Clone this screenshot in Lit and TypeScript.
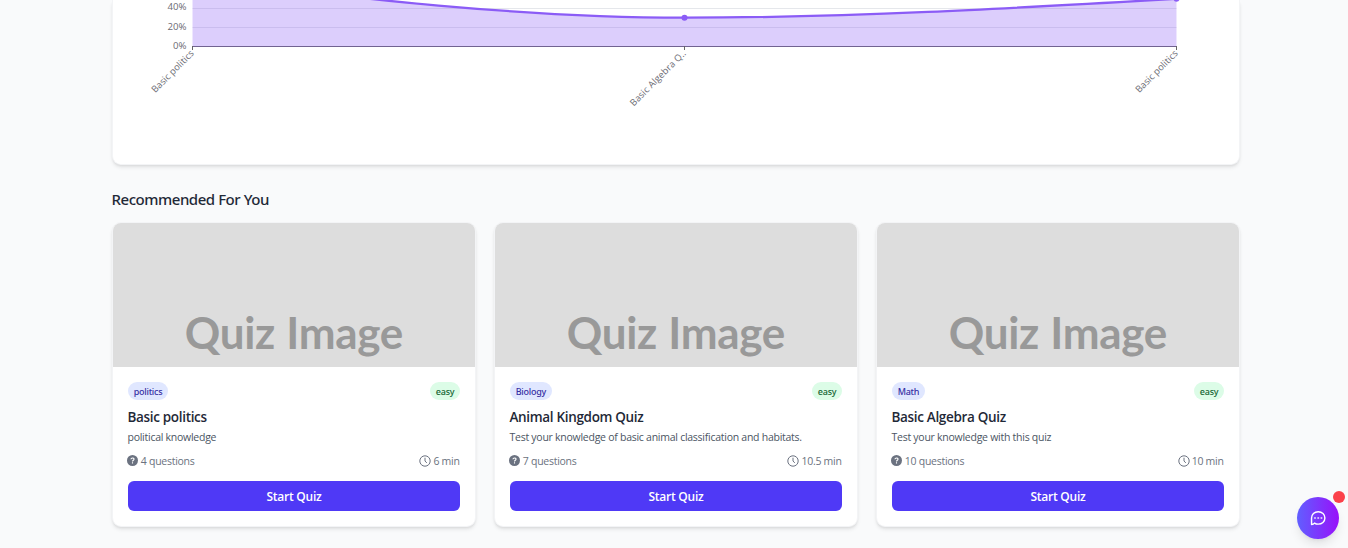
import { LitElement, html, css, svg } from "lit";
import { customElement, property } from "lit/decorators.js";

interface Quiz {
  category: string;
  level: string;
  title: string;
  description: string;
  questions: number;
  minutes: number;
}

const quizzes: Quiz[] = [
  { category: "politics", level: "easy", title: "Basic politics", description: "political knowledge", questions: 4, minutes: 6 },
  { category: "Biology", level: "easy", title: "Animal Kingdom Quiz", description: "Test your knowledge of basic animal classification and habitats.", questions: 7, minutes: 10.5 },
  { category: "Math", level: "easy", title: "Basic Algebra Quiz", description: "Test your knowledge with this quiz", questions: 10, minutes: 10 },
];

@customElement("score-chart")
class ScoreChart extends LitElement {
  static styles = css`
    :host { display: block; height: 164px; background: #fff; border: 1px solid #f3f4f6; border-top: 0;
      border-radius: 0 0 9px 9px; box-sizing: content-box;
      box-shadow: 0 3px 4.5px -1px rgba(0,0,0,.1), 0 1.5px 3px -1.5px rgba(0,0,0,.1); }
    svg { display: block; width: 1126px; height: 164px; }
    text { font-family: "Open Sans", "Noto Sans", sans-serif; font-size: 9.3px; fill: #6b6b73; }
    .grid { stroke: #e5e7eb; }
    .axis { stroke: #666; }
    .area { fill: #8b5cf6; fill-opacity: .3; }
    .line { fill: none; stroke: #8b5cf6; stroke-width: 2.25; }
    .dot { fill: #8b5cf6; }
  `;

  render() {
    const curve = "M192.5 -21.2C356.5 -1.7 520.5 17.7 684.5 17.7C848.5 17.7 1012.5 8.2 1176.5 -1.2";
    const values: [string, number][] = [["40%", 7.8], ["20%", 27.3], ["0%", 46]];
    const names: [string, number, number][] = [
      ["Basic politics", 192.5, 55.5], ["Basic Algebra Q..", 684.5, 74.5], ["Basic politics", 1176.5, 55.5],
    ];
    return html`<svg viewBox="113 0 1126 164">
      <line class="grid" x1="192.5" x2="1176.5" y1="8.5" y2="8.5"></line>
      <line class="grid" x1="192.5" x2="1176.5" y1="27.5" y2="27.5"></line>
      <line class="axis" x1="192.5" x2="1176.5" y1="46.5" y2="46.5"></line>
      <path class="area" d="${curve}L1176.5 47L192.5 47Z"></path>
      <path class="line" d=${curve}></path>
      <circle class="dot" cx="684.5" cy="17.7" r="3"></circle>
      <circle class="dot" cx="1176.5" cy="-1.2" r="3"></circle>
      ${values.map(([t, y]) => svg`<text x="186.5" y=${y + 2.5} textLength=${t.length > 2 ? 19 : 13.5} lengthAdjust="spacingAndGlyphs" text-anchor="end">${t}</text>`)}
      ${names.map(([t, x, w]) => svg`
        <line class="axis" x1=${x} x2=${x} y1="46" y2="50"></line>
        <text x=${x} y="54.8" textLength=${w} text-anchor="end" transform="rotate(-45 ${x} 52)">${t}</text>`)}
    </svg>`;
  }
}

@customElement("quiz-card")
class QuizCard extends LitElement {
  @property({ attribute: false }) quiz!: Quiz;

  static styles = css`
    :host { display: block; box-sizing: border-box; background: #fff; border: 1px solid #f3f4f6; border-radius: 9px; overflow: hidden;
      box-shadow: 0 3px 4.5px -1px rgba(0,0,0,.1), 0 1.5px 3px -1.5px rgba(0,0,0,.1); }
    .cover { height: 144px; background: #ddd; display: block; width: 100%; }
    .cover text { font: 700 44px Lato, sans-serif; fill: #999; word-spacing: 1px; }
    .body { padding: 15px; height: 129px; }
    .row { display: flex; justify-content: space-between; align-items: center; }
    .tag { height: 18px; line-height: 19px; padding: 0 5.7px; border-radius: 9px; font-family: "Noto Sans", sans-serif; font-size: 9px; font-weight: 500;
      background: #e0e7ff; color: #3730a3; letter-spacing: -.24px; }
    .level { background: #dcfce7; color: #166534; }
    h3 { margin: 7px 0 0 -.5px; font-size: 13.5px; line-height: 21px; font-weight: 600; color: #1f2937; letter-spacing: -.33px; }
    p { margin: 1px 0 0 -.5px; font-size: 10.5px; line-height: 17px; color: #4b5563; letter-spacing: -.26px; white-space: nowrap; }
    .meta { margin-top: 7px; height: 15px; font-size: 10.5px; color: #6b7280; letter-spacing: -.27px; }
    .meta span { display: flex; align-items: center; gap: 2px; }
    .meta span:first-child { margin-left: -.7px; gap: 2.5px; }
    .meta span:last-child { margin-right: .4px; }
    button { display: block; width: 100%; height: 30px; margin-top: 13px; padding: 1px 0 0; border: 0; border-radius: 6px;
      background: #4f39f6; color: #fff; font: 600 12px "Open Sans", sans-serif; letter-spacing: -.25px; line-height: 29px; }
  `;

  render() {
    const q = this.quiz;
    return html`
      <svg class="cover" viewBox="0 0 362 144"><text x="71.8" y="125.7" textLength="218.5">Quiz Image</text></svg>
      <div class="body">
        <div class="row"><span class="tag">${q.category}</span><span class="tag level">${q.level}</span></div>
        <h3>${q.title}</h3>
        <p>${q.description}</p>
        <div class="row meta">
          <span><svg width="11" height="11" viewBox="0 0 11 11"><circle cx="5.5" cy="5.5" r="5.5" fill="#6b7280"></circle>
            <path d="M3.9 4.2C4.1 2.5 7 2.5 7 4.2C7 5.2 5.5 5.3 5.5 6.5M5.5 7.3V8.5" fill="none" stroke="#fff" stroke-width="1.1"></path></svg>${q.questions} questions</span>
          <span><svg width="12" height="12" viewBox="0 0 12 12" fill="none" stroke="#6b7280"><circle cx="6" cy="6" r="5.2"></circle>
            <path d="M6 2.7V6L7.8 7.9"></path></svg>${q.minutes} min</span>
        </div>
        <button>Start Quiz</button>
      </div>`;
  }
}

@customElement("app-root")
class AppRoot extends LitElement {
  static styles = css`
    :host { display: block; box-sizing: border-box; height: 548px; padding: 0 108px 0 112px; background: #f9fafb; overflow: hidden;
      font-family: "Open Sans", "Noto Sans", sans-serif; }
    h2 { margin: 24px 0 12px -.5px; font-family: "Noto Sans", sans-serif; font-size: 15px; line-height: 21px; font-weight: 500; color: #1f2937; letter-spacing: -.46px; }
    .cards { display: grid; grid-template-columns: repeat(3, 364px); gap: 18px; }
    .chat { position: absolute; left: 1297px; top: 497px; width: 42px; height: 42px; border-radius: 50%;
      background: linear-gradient(90deg, #615fff, #9810fa); display: grid; place-items: center;
      box-shadow: 0 7px 11px -2px rgba(0,0,0,.1), 0 3px 4px -3px rgba(0,0,0,.1); }
    .alert { position: absolute; top: -6px; right: -6px; width: 12px; height: 12px; border-radius: 50%; background: #fb2c36; opacity: .9; }
  `;

  render() {
    return html`
      <score-chart></score-chart>
      <h2>Recommended For You</h2>
      <div class="cards">${quizzes.map((q) => html`<quiz-card .quiz=${q}></quiz-card>`)}</div>
      <div class="chat">
        <svg width="18" height="18" viewBox="0 0 24 24" fill="none" stroke="#fff" stroke-width="1.9" stroke-linecap="round" stroke-linejoin="round">
          <path d="M3.4 20.7V12C3.4 7 7.2 3.6 12.3 3.6C17.4 3.6 21.2 7.2 21.2 12C21.2 17 17.2 20.2 12.3 20.2C10.3 20.2 8.7 19.7 7.4 18.8C6.3 20.1 5 20.6 3.4 20.7Z"></path>
          <path d="M8 12h.01M12.3 12h.01M16.6 12h.01" stroke-width="2.8" opacity=".7"></path>
        </svg>
        <span class="alert"></span>
      </div>`;
  }
}
